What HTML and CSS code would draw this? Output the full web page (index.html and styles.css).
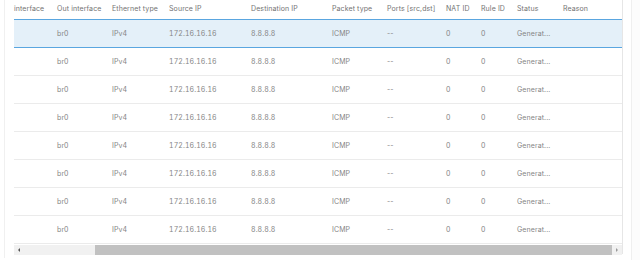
FILE: index.html
```html
<!DOCTYPE html>
<html lang="en">
<head>
  <meta charset="UTF-8">
  <title>Packet capture</title>
  <link rel="stylesheet" href="styles.css">
</head>
<body>
  <div class="page">
    <div class="panel">
      <div class="table-wrap">
        <table class="packets">
          <colgroup>
            <col class="c-in">
            <col class="c-out">
            <col class="c-eth">
            <col class="c-src">
            <col class="c-dst">
            <col class="c-pkt">
            <col class="c-ports">
            <col class="c-nat">
            <col class="c-rule">
            <col class="c-status">
            <col class="c-reason">
          </colgroup>
          <thead>
            <tr>
              <th>interface</th>
              <th>Out interface</th>
              <th>Ethernet type</th>
              <th>Source IP</th>
              <th>Destination IP</th>
              <th>Packet type</th>
              <th>Ports [src,dst]</th>
              <th>NAT ID</th>
              <th>Rule ID</th>
              <th>Status</th>
              <th>Reason</th>
            </tr>
          </thead>
          <tbody>
            <tr class="selected">
              <td></td><td>br0</td><td>IPv4</td><td class="ip">172.16.16.16</td><td class="ip">8.8.8.8</td><td>ICMP</td><td>--</td><td>0</td><td>0</td><td>Generat...</td><td></td>
            </tr>
            <tr>
              <td></td><td>br0</td><td>IPv4</td><td class="ip">172.16.16.16</td><td class="ip">8.8.8.8</td><td>ICMP</td><td>--</td><td>0</td><td>0</td><td>Generat...</td><td></td>
            </tr>
            <tr>
              <td></td><td>br0</td><td>IPv4</td><td class="ip">172.16.16.16</td><td class="ip">8.8.8.8</td><td>ICMP</td><td>--</td><td>0</td><td>0</td><td>Generat...</td><td></td>
            </tr>
            <tr>
              <td></td><td>br0</td><td>IPv4</td><td class="ip">172.16.16.16</td><td class="ip">8.8.8.8</td><td>ICMP</td><td>--</td><td>0</td><td>0</td><td>Generat...</td><td></td>
            </tr>
            <tr>
              <td></td><td>br0</td><td>IPv4</td><td class="ip">172.16.16.16</td><td class="ip">8.8.8.8</td><td>ICMP</td><td>--</td><td>0</td><td>0</td><td>Generat...</td><td></td>
            </tr>
            <tr>
              <td></td><td>br0</td><td>IPv4</td><td class="ip">172.16.16.16</td><td class="ip">8.8.8.8</td><td>ICMP</td><td>--</td><td>0</td><td>0</td><td>Generat...</td><td></td>
            </tr>
            <tr>
              <td></td><td>br0</td><td>IPv4</td><td class="ip">172.16.16.16</td><td class="ip">8.8.8.8</td><td>ICMP</td><td>--</td><td>0</td><td>0</td><td>Generat...</td><td></td>
            </tr>
            <tr>
              <td></td><td>br0</td><td>IPv4</td><td class="ip">172.16.16.16</td><td class="ip">8.8.8.8</td><td>ICMP</td><td>--</td><td>0</td><td>0</td><td>Generat...</td><td></td>
            </tr>
          </tbody>
        </table>

        <!-- Horizontal scrollbar -->
        <div class="hscroll">
          <span class="arrow arrow-left"></span>
          <div class="track">
            <div class="thumb"></div>
          </div>
          <span class="arrow arrow-right"></span>
        </div>
      </div>
    </div>
    <div class="side"></div>
  </div>
</body>
</html>
```

FILE: styles.css
```css
/* Global Styles */
:root {
  --text: #858585;
  --head: #737373;
  --line: #ebebeb;
  --select-bg: #e4f0f9;
  --select-line: #5aa6e0;
}

* {
  margin: 0;
  padding: 0;
  box-sizing: border-box;
}

body {
  font-family: 'Inter', 'Liberation Sans', sans-serif;
  background-color: #ffffff;
  color: var(--text);
  overflow: hidden;
}

.page {
  display: flex;
  height: 260px;
}

/* Left panel */
.panel {
  margin-left: 4px;
  border-left: 1px solid #f0f0f0;
  padding-left: 9px;
  height: 258px;
}

.table-wrap {
  width: 609px;
  border-right: 1px solid #e6e6e6;
  height: 254px;
}

/* Table */
.packets {
  border-collapse: collapse;
  table-layout: fixed;
  width: 608px;
  font-size: 7px;
  letter-spacing: 0.1px;
}

.c-in { width: 43px; }
.c-out { width: 55px; }
.c-eth { width: 57px; }
.c-src { width: 82px; }
.c-dst { width: 81px; }
.c-pkt { width: 55px; }
.c-ports { width: 59px; }
.c-nat { width: 35px; }
.c-rule { width: 36px; }
.c-status { width: 46px; }
.c-reason { width: 59px; }

.packets th {
  height: 19px;
  text-align: left;
  font-weight: 400;
  color: var(--head);
  white-space: nowrap;
  vertical-align: middle;
  padding-bottom: 1px;
}

.packets td {
  height: 28px;
  border-bottom: 1px solid var(--line);
  white-space: nowrap;
  vertical-align: middle;
}

.packets td.ip {
  font-variant-numeric: tabular-nums;
}

.packets tr.selected td {
  background-color: var(--select-bg);
  border-top: 1px solid var(--select-line);
  border-bottom: 1px solid var(--select-line);
}

/* Scrollbar */
.hscroll {
  display: flex;
  align-items: center;
  height: 10px;
  margin-top: 1px;
  background-color: #f1f1f1;
}

.track {
  flex: 1;
  height: 100%;
  padding-left: 71px;
}

.thumb {
  height: 100%;
  background-color: #c1c1c1;
}

.arrow {
  width: 10px;
  height: 10px;
  position: relative;
}

.arrow::after {
  content: '';
  position: absolute;
  top: 3px;
  border-top: 2px solid transparent;
  border-bottom: 2px solid transparent;
}

.arrow-left::after {
  left: 4px;
  border-right: 2px solid #555;
}

.arrow-right::after {
  left: 4px;
  border-left: 2px solid #999;
}

/* Right panel */
.side {
  margin-left: 8px;
  flex: 1;
  border-left: 1px solid #efefef;
  background-color: #fcfcfc;
}
```
